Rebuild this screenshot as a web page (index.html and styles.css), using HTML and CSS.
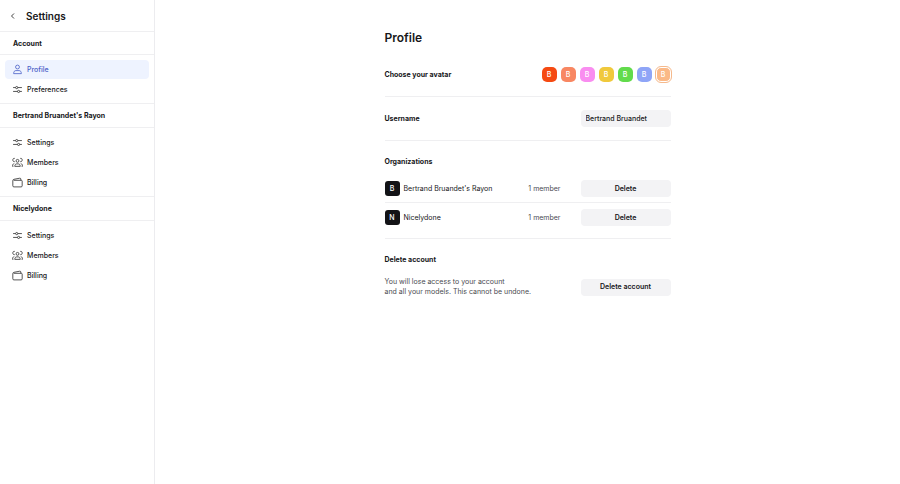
FILE: index.html
```html
<!doctype html>
<html lang="en">
<head>
	<meta charset="UTF-8">
	<title>Settings</title>
	<link rel="stylesheet" href="styles.css">
</head>
<body>
	<svg class="sprite" aria-hidden="true">
		<symbol id="i-user" viewBox="0 0 20 20">
			<circle cx="10" cy="5.500" r="3.500"/>
			<path d="M7 12h6c2.500 0 4 2 4 5.500H3C3 14 4.500 12 7 12z"/>
		</symbol>
		<symbol id="i-sliders" viewBox="0 0 20 20">
			<path d="M2 6.500h4.500M10.500 6.500H18M2 13.500h8M14 13.500h4"/>
			<circle cx="8.500" cy="6.500" r="2"/>
			<circle cx="12" cy="13.500" r="2"/>
		</symbol>
		<symbol id="i-members" viewBox="0 0 20 20">
			<circle cx="10" cy="7" r="2.600"/>
			<path d="M8.500 12.500h3c2 0 3.200 1.500 3.500 4.500H5c.3-3 1.500-4.500 3.500-4.500z"/>
			<path d="M5 2.500C2.500 2 1.500 3.500 1.500 5.500S3 9 5 8.500M15 2.500c2.500-.5 3.500 1 3.500 3S17 9 15 8.500M4 12c-2 .3-3 2-3 5h1.500M16 12c2 .3 3 2 3 5h-1.500"/>
		</symbol>
		<symbol id="i-wallet" viewBox="0 0 20 20">
			<path d="M3 6h14a1.500 1.500 0 0 1 1.500 1.500v8.500a2 2 0 0 1-2 2h-13a2 2 0 0 1-2-2V6.500C1.500 5 2.500 4.500 3.500 4.200L14 2.200c1.500-.2 2 .5 2 1.500V6"/>
		</symbol>
	</svg>

	<div class="page">
		<aside class="sidebar">
			<header class="side-top">
				<a href="#" class="back" aria-label="Back">
					<svg viewBox="0 0 8 8"><path d="M5 1.500 2.500 4 5 6.500"/></svg>
				</a>
				<span class="side-title">Settings</span>
			</header>
			<nav>
				<h2 class="side-head">Account</h2>
				<ul class="menu">
					<li><a href="#" class="active"><svg><use href="#i-user"/></svg>Profile</a></li>
					<li><a href="#"><svg><use href="#i-sliders"/></svg>Preferences</a></li>
				</ul>
				<h2 class="side-head">Bertrand Bruandet's Rayon</h2>
				<ul class="menu">
					<li><a href="#"><svg><use href="#i-sliders"/></svg>Settings</a></li>
					<li><a href="#"><svg><use href="#i-members"/></svg>Members</a></li>
					<li><a href="#"><svg><use href="#i-wallet"/></svg>Billing</a></li>
				</ul>
				<h2 class="side-head">Nicelydone</h2>
				<ul class="menu">
					<li><a href="#"><svg><use href="#i-sliders"/></svg>Settings</a></li>
					<li><a href="#"><svg><use href="#i-members"/></svg>Members</a></li>
					<li><a href="#"><svg><use href="#i-wallet"/></svg>Billing</a></li>
				</ul>
			</nav>
		</aside>

		<main class="content">
			<div class="inner">
				<h1>Profile</h1>

				<section class="row">
					<h3>Choose your avatar</h3>
					<div class="avatars">
						<button type="button" class="avatar red" aria-label="Red">B</button>
						<button type="button" class="avatar coral" aria-label="Coral">B</button>
						<button type="button" class="avatar pink" aria-label="Pink">B</button>
						<button type="button" class="avatar yellow" aria-label="Yellow">B</button>
						<button type="button" class="avatar green" aria-label="Green">B</button>
						<button type="button" class="avatar blue" aria-label="Blue">B</button>
						<button type="button" class="avatar peach selected" aria-label="Peach" aria-pressed="true">B</button>
					</div>
				</section>

				<section class="row">
					<label for="username">Username</label>
					<input type="text" id="username" class="field" value="Bertrand Bruandet">
				</section>

				<section class="block">
					<h3>Organizations</h3>
					<ul class="orgs">
						<li>
							<span class="avatar black">B</span>
							<span class="org-name">Bertrand Bruandet's Rayon</span>
							<span class="count">1 member</span>
							<button type="button" class="btn">Delete</button>
						</li>
						<li>
							<span class="avatar black">N</span>
							<span class="org-name">Nicelydone</span>
							<span class="count">1 member</span>
							<button type="button" class="btn">Delete</button>
						</li>
					</ul>
				</section>

				<section class="block">
					<h3>Delete account</h3>
					<div class="danger">
						<p>You will lose access to your account<br>and all your models. This cannot be undone.</p>
						<button type="button" class="btn">Delete account</button>
					</div>
				</section>
			</div>
		</main>
	</div>
</body>
</html>
```
FILE: styles.css
```css
*{
	box-sizing:border-box;
}
body,h1,h2,h3,p,ul{
	margin:0;
	padding:0;
}
body{
	font:400 7px/16px Inter,"Liberation Sans",sans-serif;
	color:#17171a;
	background:#fff;
}
ul{
	list-style:none;
}
a{
	color:inherit;
	text-decoration:none;
}
button,input{
	border:0;
	padding:0;
	font:inherit;
	color:inherit;
}
button{
	cursor:pointer;
}
h3,label{
	font-size:7px;
	font-weight:700;
}
.sprite{
	display:none;
}
.page{
	display:flex;
	min-height:100vh;
}

/* sidebar */
.sidebar{
	flex:0 0 155px;
	border-right:1px solid #ececef;
}
.side-top{
	display:flex;
	align-items:center;
	gap:9px;
	height:32px;
	padding-left:9px;
	border-bottom:1px solid #efeff1;
}
.back{
	display:flex;
}
.back svg{
	width:8px;
	height:8px;
	fill:none;
	stroke:#444;
}
.side-title{
	font-size:10px;
	font-weight:600;
}
.side-head{
	height:24px;
	padding-left:13px;
	border-bottom:1px solid #efeff1;
	font-size:7px;
	font-weight:700;
	line-height:23px;
}
.side-head:first-child{
	height:23px;
}
.menu{
	display:flex;
	flex-direction:column;
	gap:1px;
	padding:5px 5px 4px;
	border-bottom:1px solid #efeff1;
}
.menu:last-child{
	border-bottom:0;
}
.menu a{
	display:flex;
	align-items:center;
	gap:5px;
	height:19px;
	padding-left:7px;
	border-radius:4px;
	font-weight:500;
	line-height:18px;
}
.menu svg{
	width:11px;
	height:11px;
	margin-right:-1px;
	fill:none;
	stroke:#333;
	stroke-width:1.5;
}
.menu .active{
	color:#4c62c8;
	background:#eef3ff;
}
.menu .active svg{
	stroke:#4c62c8;
}

/* profile */
.content{
	flex:1;
	padding:30px 20px;
}
.inner{
	max-width:286px;
	margin:0 auto;
}
h1{
	margin-bottom:7px;
	font-size:12px;
	font-weight:600;
}
.row{
	display:flex;
	align-items:center;
	justify-content:space-between;
	height:44px;
	border-bottom:1px solid #efeff1;
}
.avatars{
	display:flex;
	gap:4px;
}
.avatar{
	flex:none;
	width:15px;
	height:15px;
	border-radius:5px;
	color:#fff;
	font-weight:500;
	line-height:15px;
	text-align:center;
}
.red{background:#f54a12;}
.coral{background:#f88762;}
.pink{background:#f98df0;}
.yellow{background:#f0c93c;}
.green{background:#62db4c;}
.blue{background:#8fa5f7;}
.peach{background:#fbb987;}
.black{
	border-radius:3px;
	background:#131316;
}
.selected{
	border:1px solid #fff;
	line-height:13px;
	outline:1px solid #f5b98c;
}
.field,.btn{
	flex:none;
	width:90px;
	height:17px;
	border-radius:4px;
	background:#f3f3f5;
}
.field{
	padding:0 5px;
	font-weight:500;
}
.btn{
	font-weight:600;
}
.block{
	padding:13px 0 7px;
}
.block:not(:last-child){
	border-bottom:1px solid #efeff1;
}
.orgs{
	padding-top:4px;
}
.orgs li{
	display:flex;
	align-items:center;
	padding:6px 0 5px;
}
.orgs li:not(:last-child){
	border-bottom:1px solid #efeff1;
}
.org-name{
	flex:1;
	padding-left:4px;
}
.count{
	padding-right:20px;
	color:#4a4a50;
}
.danger{
	display:flex;
	align-items:center;
	justify-content:space-between;
	padding-top:9px;
	color:#4a4a50;
}
.danger p{
	line-height:10px;
}
.danger .btn{
	color:#17171a;
}
```
